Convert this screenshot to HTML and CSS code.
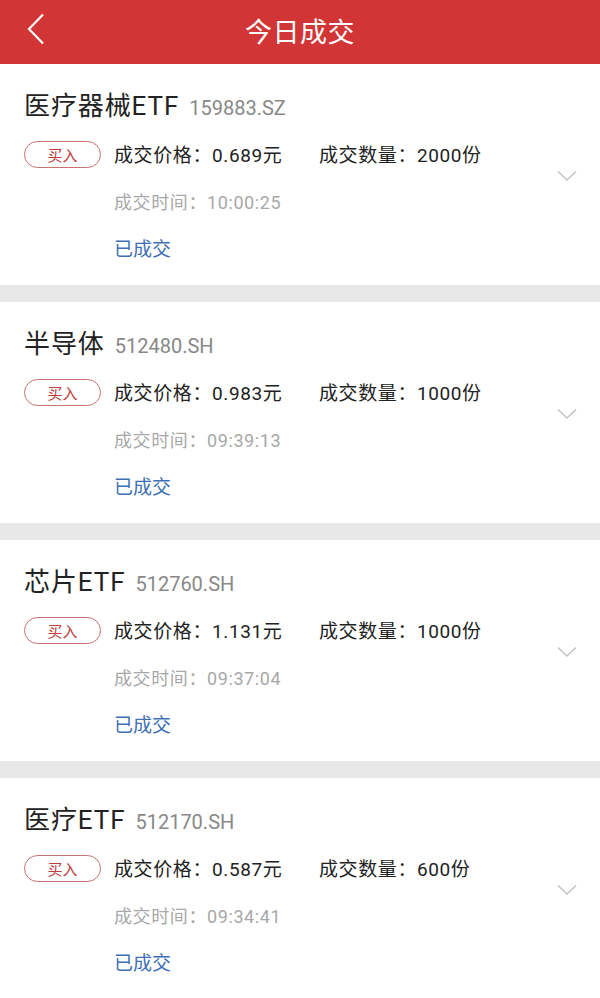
FILE: index.html
```html
<!DOCTYPE html>
<html lang="zh-CN">
<head>
<meta charset="utf-8">
<link rel="stylesheet" href="styles.css">
</head>
<body>
<header class="topbar">
  <svg class="back" width="20" height="32" viewBox="0 0 20 32"><path d="M17 1.5 L3 16 L17 30.5" fill="none" stroke="#fff" stroke-width="2.2"/></svg>
  <h1 class="title">今日成交</h1>
</header>
<main class="list">
  <section class="card">
    <div class="name-row"><span class="name">医疗器械ETF</span><span class="code">159883.SZ</span></div>
    <div class="body">
      <div class="badge-col"><span class="badge">买入</span></div>
      <div class="info">
        <div class="deal"><span class="price">成交价格：0.689元</span><span class="qty">成交数量：2000份</span></div>
        <div class="time">成交时间：10:00:25</div>
        <div class="status">已成交</div>
      </div>
      <svg class="chev" width="20" height="12" viewBox="0 0 20 12"><path d="M1 1.5 L10 10 L19 1.5" fill="none" stroke="#c4c4c4" stroke-width="1.6"/></svg>
    </div>
  </section>
  <section class="card">
    <div class="name-row"><span class="name">半导体</span><span class="code">512480.SH</span></div>
    <div class="body">
      <div class="badge-col"><span class="badge">买入</span></div>
      <div class="info">
        <div class="deal"><span class="price">成交价格：0.983元</span><span class="qty">成交数量：1000份</span></div>
        <div class="time">成交时间：09:39:13</div>
        <div class="status">已成交</div>
      </div>
      <svg class="chev" width="20" height="12" viewBox="0 0 20 12"><path d="M1 1.5 L10 10 L19 1.5" fill="none" stroke="#c4c4c4" stroke-width="1.6"/></svg>
    </div>
  </section>
  <section class="card">
    <div class="name-row"><span class="name">芯片ETF</span><span class="code">512760.SH</span></div>
    <div class="body">
      <div class="badge-col"><span class="badge">买入</span></div>
      <div class="info">
        <div class="deal"><span class="price">成交价格：1.131元</span><span class="qty">成交数量：1000份</span></div>
        <div class="time">成交时间：09:37:04</div>
        <div class="status">已成交</div>
      </div>
      <svg class="chev" width="20" height="12" viewBox="0 0 20 12"><path d="M1 1.5 L10 10 L19 1.5" fill="none" stroke="#c4c4c4" stroke-width="1.6"/></svg>
    </div>
  </section>
  <section class="card">
    <div class="name-row"><span class="name">医疗ETF</span><span class="code">512170.SH</span></div>
    <div class="body">
      <div class="badge-col"><span class="badge">买入</span></div>
      <div class="info">
        <div class="deal"><span class="price">成交价格：0.587元</span><span class="qty">成交数量：600份</span></div>
        <div class="time">成交时间：09:34:41</div>
        <div class="status">已成交</div>
      </div>
      <svg class="chev" width="20" height="12" viewBox="0 0 20 12"><path d="M1 1.5 L10 10 L19 1.5" fill="none" stroke="#c4c4c4" stroke-width="1.6"/></svg>
    </div>
  </section>
</main>
</body>
</html>
```

FILE: styles.css
```css
* { box-sizing: border-box; }
html, body {
  margin: 0;
  padding: 0;
  background: #e8e8e8;
  font-family: Roboto, "Noto Sans CJK SC", sans-serif;
  color: #222;
  overflow: hidden;
}
.topbar {
  height: 64px;
  background: #d13535;
  display: flex;
  align-items: center;
  justify-content: center;
  position: relative;
}
.back {
  position: absolute;
  left: 26px;
  top: 13px;
}
.title {
  margin: 0 0 3px;
  color: #fff;
  font-size: 27px;
  font-weight: 400;
  letter-spacing: 0.5px;
}
.list {
  display: flex;
  flex-direction: column;
  gap: 17px;
}
.card {
  background: #fff;
  height: 221px;
  padding: 24px 0 0 24px;
}
.name-row {
  display: flex;
  align-items: baseline;
  gap: 10px;
  height: 36px;
}
.name {
  font-size: 26px;
  line-height: 36px;
  letter-spacing: 0.9px;
  color: #222;
}
.code {
  font-size: 20px;
  color: #888;
}
.body {
  display: flex;
  margin-top: 17px;
}
.badge-col {
  width: 90px;
  padding-top: 0;
}
.badge {
  display: flex;
  align-items: center;
  justify-content: center;
  width: 77px;
  height: 27px;
  border: 1px solid #c97070;
  border-radius: 14px;
  color: #c23c3c;
  font-size: 15px;
}
.info {
  flex: 1;
}
.deal {
  display: flex;
  font-size: 19px;
  line-height: 30px;
  letter-spacing: 0.6px;
  color: #222;
}
.price {
  width: 205px;
}
.time {
  margin-top: 17px;
  font-size: 18px;
  line-height: 30px;
  letter-spacing: 0.6px;
  color: #a8a8a8;
}
.status {
  margin-top: 17px;
  font-size: 19px;
  line-height: 30px;
  color: #3f70b5;
}
.chev {
  margin: 29px 23px 0 0;
}
```
